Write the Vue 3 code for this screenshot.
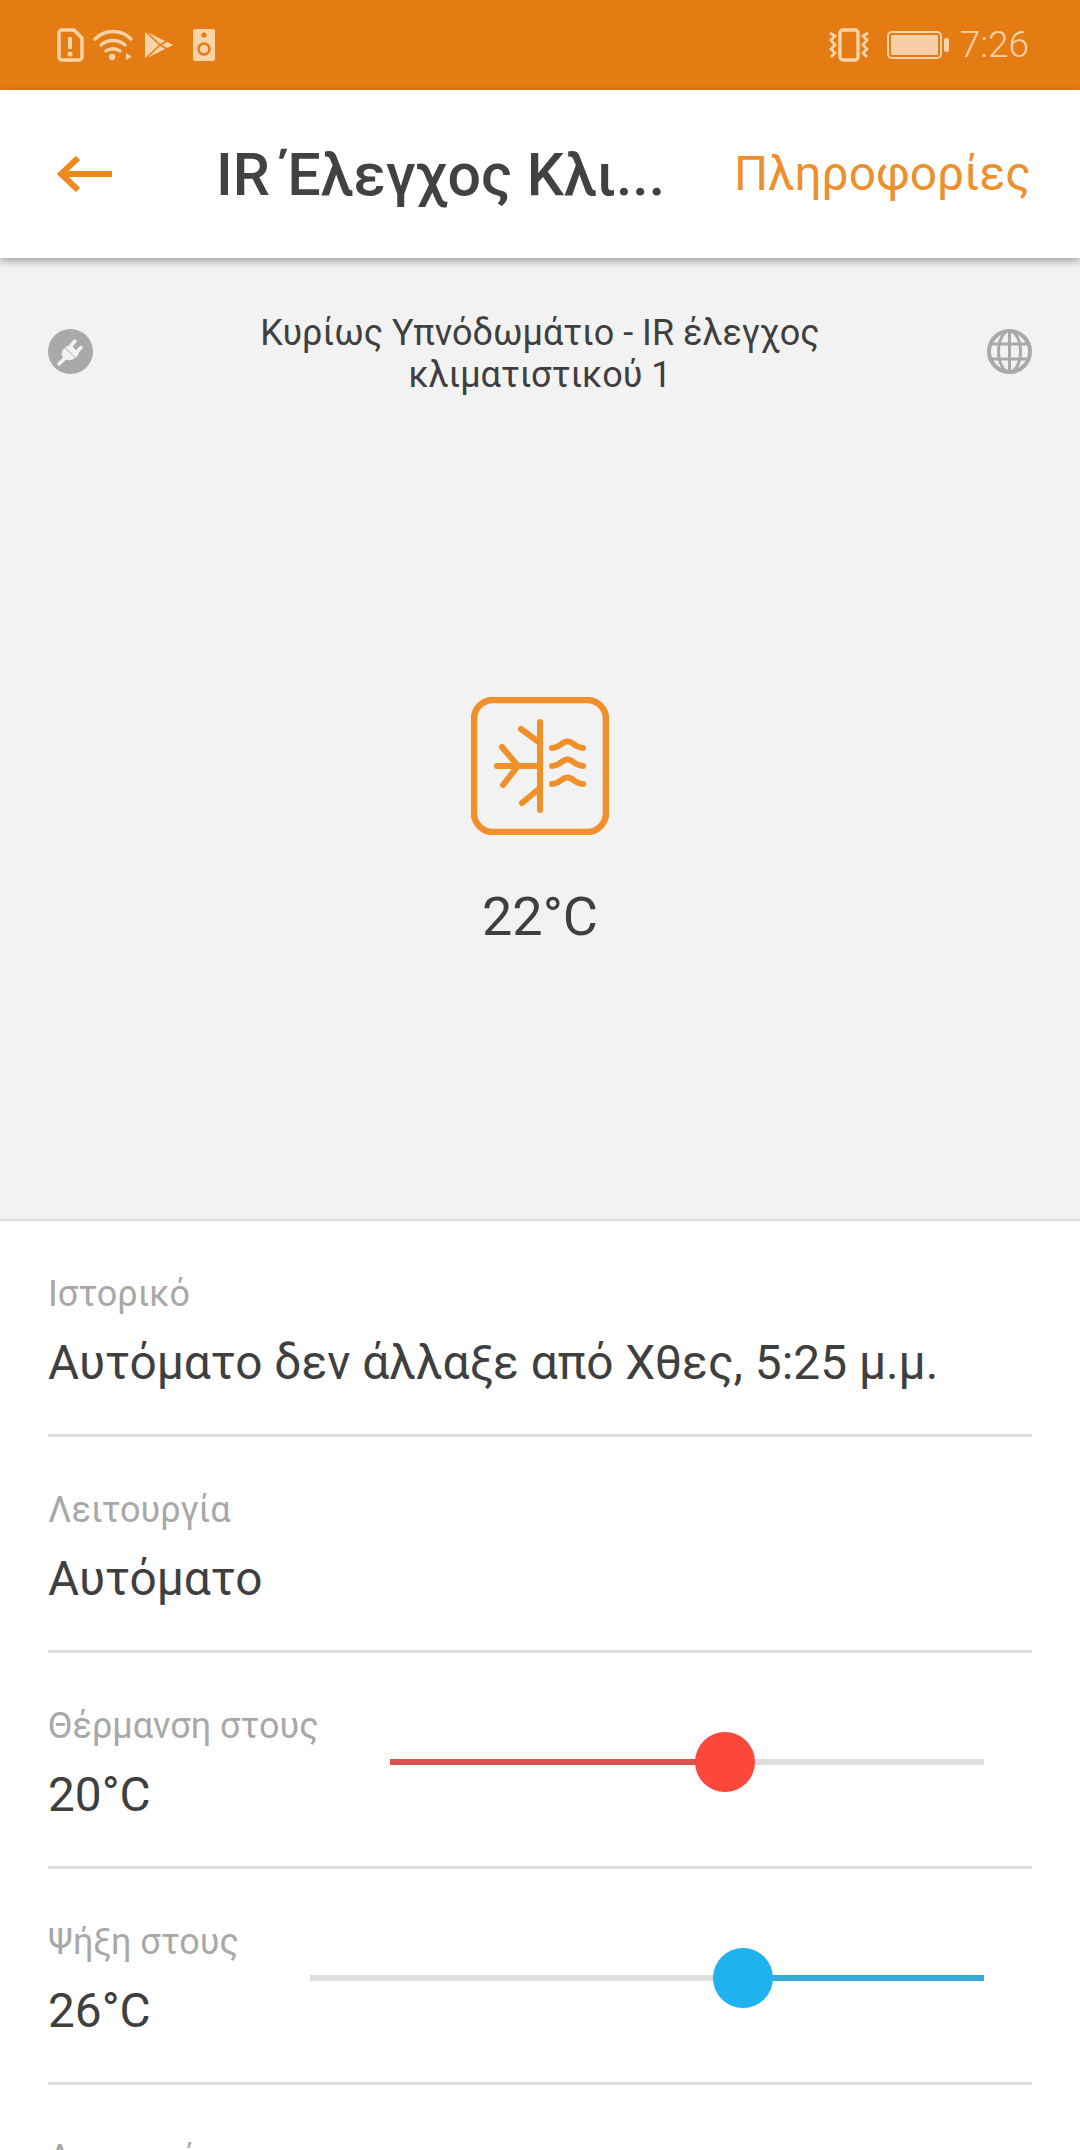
<template>
  <div class="screen">
    <div class="status-bar">
      <div class="status-left">
        <svg class="sim" width="27" height="34" viewBox="0 0 27 34">
          <path d="M5 2h12l8 8v19a3 3 0 0 1-3 3H5a3 3 0 0 1-3-3V5a3 3 0 0 1 3-3z" fill="none" stroke="currentColor" stroke-width="3.400" />
          <path d="M13 9v12" stroke="currentColor" stroke-width="4" />
          <circle cx="13" cy="26" r="2.500" fill="currentColor" />
        </svg>
        <svg class="wifi" width="40" height="32" viewBox="0 0 40 32" fill="none" stroke="currentColor" stroke-width="3.400" stroke-linecap="round">
          <path d="M2 10c10-10 26-10 36 0" />
          <path d="M8 16c7-6 17-6 24 0" />
          <path d="M13 22c4-3 10-3 14 0" />
          <circle cx="19" cy="28" r="3.200" fill="currentColor" stroke="none" />
          <path d="M33 24v7l6-3.500z" fill="currentColor" stroke="none" />
        </svg>
        <svg class="play" width="28" height="28" viewBox="0 0 28 28">
          <path d="M0 0l28 14L0 28z" fill="currentColor" />
          <path d="M-1 -1l16 15L-1 29M15 14l7-4M15 14l7 4" fill="none" stroke="#e57c13" stroke-width="1.600" />
        </svg>
        <svg class="speaker" width="22" height="32" viewBox="0 0 22 32">
          <rect width="22" height="32" rx="2" fill="currentColor" />
          <circle cx="11" cy="6" r="2.600" fill="#e57c13" />
          <circle cx="11" cy="20" r="5.500" fill="none" stroke="#e57c13" stroke-width="2.500" />
        </svg>
      </div>
      <div class="status-right">
        <svg class="vibrate" width="44" height="34" viewBox="0 0 44 34" fill="none" stroke="currentColor" stroke-width="2.800">
          <rect x="13" y="2" width="18" height="30" rx="3" stroke-width="3.400" />
          <path d="M3 5l5 3-4 4 4 5-4 4 4 4-4 4" />
          <path d="M41 5l-5 3 4 4-4 5 4 4-4 4 4 4" />
        </svg>
        <svg class="battery" width="62" height="28" viewBox="0 0 62 28">
          <rect x="1" y="1" width="53" height="26" rx="4" fill="none" stroke="currentColor" stroke-width="2" />
          <rect x="4" y="4" width="47" height="20" rx="1" fill="#f7cfa6" />
          <rect x="57" y="7" width="5" height="14" rx="2" fill="currentColor" />
        </svg>
        <span class="time">7:26</span>
      </div>
    </div>

    <header class="app-header">
      <svg class="back" width="55" height="36" viewBox="0 0 55 36" fill="none" stroke="#ee8a1d" stroke-width="6">
        <path d="M4 18h51" />
        <path d="M21 2L4 18l17 16" />
      </svg>
      <h1 class="title">IR Έλεγχος Κλι...</h1>
      <span class="info-link">Πληροφορίες</span>
    </header>

    <section class="hero">
      <div class="device-row">
        <svg class="device-icon" width="45" height="45" viewBox="0 0 45 45">
          <circle cx="22.500" cy="22.500" r="22.500" fill="#a9a9a9" />
          <path d="M11 35l5-5" stroke="#f2f2f2" stroke-width="3.500" stroke-linecap="round" />
          <path d="M17 19l10 10c-4 3-9 3-12-.5-2.500-3-1.500-7 2-9.500z" fill="#f2f2f2" />
          <path d="M21 19l6-7M27 25l6-6.500" stroke="#f2f2f2" stroke-width="3.500" stroke-linecap="round" />
          <path d="M17 18l11 11 3-5-8-8z" fill="#f2f2f2" />
        </svg>
        <div class="device-name">Κυρίως Υπνόδωμάτιο - IR έλεγχος<br />κλιματιστικού 1</div>
        <svg class="device-icon" width="45" height="45" viewBox="0 0 45 45" fill="none" stroke="#a9a9a9" stroke-width="3">
          <circle cx="22.500" cy="22.500" r="20.500" stroke-width="4" />
          <ellipse cx="22.500" cy="22.500" rx="11" ry="20.500" />
          <path d="M22.500 2v41M3 15h39M3 30h39" />
        </svg>
      </div>
      <div class="mode">
        <svg width="138" height="138" viewBox="0 0 138 138" fill="none" stroke="#f0902a" stroke-width="6" stroke-linecap="round" stroke-linejoin="round">
          <rect x="3" y="3" width="132" height="132" rx="19" stroke-width="6.500" />
          <path d="M69 25v88M26 69h43M31 50l16 19-15 19M50 32l19 14M51 106l18-15" />
          <path d="M81 51c5 0 8-3 11-5 3-2 6-2 9 0 3 2 6 5 11 5" />
          <path d="M81 69c5 0 8-3 11-5 3-2 6-2 9 0 3 2 6 5 11 5" />
          <path d="M81 87c5 0 8-3 11-5 3-2 6-2 9 0 3 2 6 5 11 5" />
        </svg>
        <div class="mode-temp">22°C</div>
      </div>
    </section>

    <section class="rows">
      <div v-for="row in rows" :key="row.label" class="row">
        <div class="row-text">
          <div class="row-label">{{ row.label }}</div>
          <div class="row-value">{{ row.value }}</div>
        </div>
        <div v-if="row.slider" class="slider">
          <div class="track">
            <div class="fill" :class="row.slider.side" :style="fillStyle(row.slider)"></div>
            <div class="thumb" :style="{ left: row.slider.pos + '%', background: row.slider.thumb }"></div>
          </div>
        </div>
      </div>
    </section>
  </div>
</template>

<script setup>
const rows = [
  { label: 'Ιστορικό', value: 'Αυτόματο δεν άλλαξε από Χθες, 5:25 μ.μ.' },
  { label: 'Λειτουργία', value: 'Αυτόματο' },
  {
    label: 'Θέρμανση στους',
    value: '20°C',
    slider: { pos: 56.5, side: 'left', color: '#d9534f', thumb: '#fb483a' }
  },
  {
    label: 'Ψήξη στους',
    value: '26°C',
    slider: { pos: 64.3, side: 'right', color: '#36a9d8', thumb: '#20b2ee' }
  },
  { label: 'Ανεμιστήρας', value: 'Αυτόματο' }
]

const fillStyle = (s) => ({
  background: s.color,
  width: (s.side === 'left' ? s.pos : 100 - s.pos) + '%'
})
</script>

<style>
html,
body {
  margin: 0;
  overflow: hidden;
}
</style>

<style scoped>
.screen {
  width: 1080px;
  height: 2150px;
  overflow: hidden;
  background: #fff;
  font-family: Roboto, "Noto Sans", sans-serif;
  color: #3f3f3f;
}
.status-bar {
  height: 90px;
  background: #e57c13;
  color: #fbd3a8;
  display: flex;
  align-items: center;
  justify-content: space-between;
  padding: 0 51px 0 57px;
  box-sizing: border-box;
}
.status-left,
.status-right {
  display: flex;
  align-items: center;
}
.wifi { margin-left: 9px; }
.play { margin-left: 12px; }
.speaker { margin-left: 20px; }
.battery { margin-left: 16px; }
.time {
  margin-left: 11px;
  font-size: 37px;
  font-weight: 300;
  line-height: 40px;
}
.app-header {
  position: relative;
  height: 168px;
  background: #fff;
  box-shadow: 0 3px 8px rgba(0, 0, 0, 0.35);
  display: flex;
  align-items: center;
  padding: 0 49px 0 57px;
}
.title {
  margin: 0 0 0 104px;
  font-size: 59px;
  font-weight: 500;
  white-space: nowrap;
  color: #424242;
  flex: 1;
}
.info-link {
  font-size: 47.8px;
  color: #ee8f2d;
  white-space: nowrap;
}
.hero {
  height: 963px;
  box-sizing: border-box;
  background: #f2f2f2;
  border-bottom: 2px solid #dedede;
  padding-top: 54px;
}
.device-row {
  display: flex;
  align-items: center;
  justify-content: space-between;
  padding: 0 48px;
}
.device-icon {
  margin-bottom: 6px;
}
.device-name {
  font-size: 36px;
  line-height: 42px;
  text-align: center;
}
.mode {
  margin-top: 301px;
  display: flex;
  flex-direction: column;
  align-items: center;
}
.mode-temp {
  margin-top: 50px;
  font-size: 54px;
  line-height: 64px;
}
.row {
  height: 216px;
  box-sizing: border-box;
  margin: 0 48px;
  border-bottom: 3px solid #dedede;
  padding-top: 51px;
  display: flex;
  gap: 71px;
}
.row-text {
  flex: none;
}
.row-label {
  font-size: 36px;
  line-height: 44px;
  color: #a8a8a8;
}
.row-value {
  margin-top: 20px;
  font-size: 47.8px;
  line-height: 54px;
}
.slider {
  flex: 1;
  padding: 55px 48px 0 0;
}
.track {
  position: relative;
  height: 6px;
  background: #dedede;
}
.fill {
  position: absolute;
  top: 0;
  height: 6px;
}
.fill.left { left: 0; }
.fill.right { right: 0; }
.thumb {
  position: absolute;
  top: -27px;
  width: 60px;
  height: 60px;
  margin-left: -30px;
  border-radius: 50%;
}
</style>
